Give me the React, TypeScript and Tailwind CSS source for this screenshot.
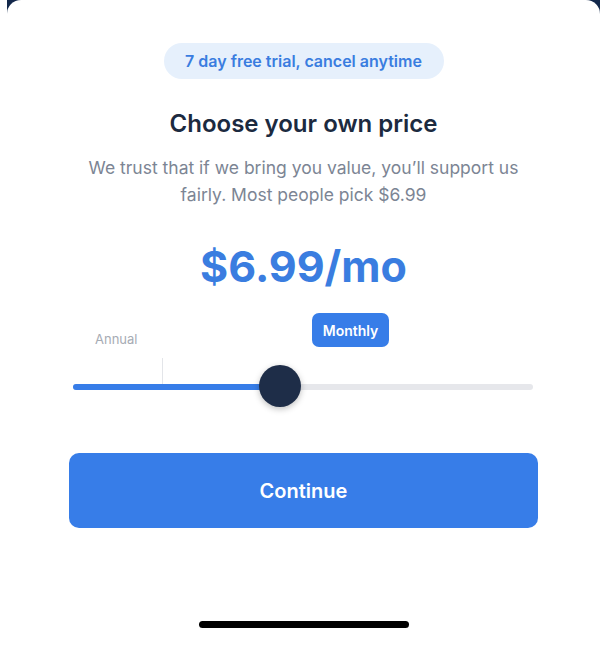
export default function App() {
  return (
    <div className="h-[650px] w-full bg-white px-[7px] font-['Inter',sans-serif]">
      <div className="h-full bg-[#13284b]">
        <div className="flex h-full flex-col items-center rounded-t-[14px] bg-white">
          <div className="mt-[43px] flex h-[36px] w-[280px] items-center justify-center rounded-full bg-[#e6f0fc] text-[16px] font-semibold text-[#3a7de0]">
            7 day free trial, cancel anytime
          </div>

          <h1 className="mt-[29px] text-[24px] leading-[32px] font-semibold text-[#1c2a40]">
            Choose your own price
          </h1>

          <p className="mt-[14px] w-[470px] text-center text-[17.5px] leading-[27px] text-[#7c8594]">
            We trust that if we bring you value, you’ll support us fairly. Most people pick $6.99
          </p>

          <div className="mt-[30px] text-[43px] leading-[56px] font-bold text-[#3a7de0]">
            $6.99/mo
          </div>

          <div className="relative mt-[19px] h-[96px] w-[460px] self-start ml-[66px]">
            <span className="absolute left-[22px] top-[17px] text-[13px] text-[#a6abb4]">Annual</span>
            <div className="absolute left-[239px] top-0 flex h-[34px] w-[77px] items-center justify-center rounded-[7px] bg-[#377de8] text-[14px] font-semibold text-white">
              Monthly
            </div>
            <div className="absolute left-[89px] top-[45px] h-[28px] w-px bg-[#e3e5e9]" />
            <div className="absolute left-0 right-0 top-[71px] flex h-[6px] overflow-hidden rounded-full bg-[#e6e7eb]">
              <div className="h-full w-[207px] bg-[#377de8]" />
            </div>
            <div className="absolute left-[186px] top-[52px] h-[42px] w-[42px] rounded-full bg-[#1e2d48] shadow-[0_2px_6px_rgba(0,0,0,0.25)]" />
          </div>

          <button className="mt-[44px] h-[75px] w-[469px] self-start ml-[62px] rounded-[10px] bg-[#377de8] text-[20px] font-semibold text-white">
            Continue
          </button>

          <div className="mt-[93px] h-[7px] w-[210px] rounded-full bg-black" />
        </div>
      </div>
    </div>
  );
}
